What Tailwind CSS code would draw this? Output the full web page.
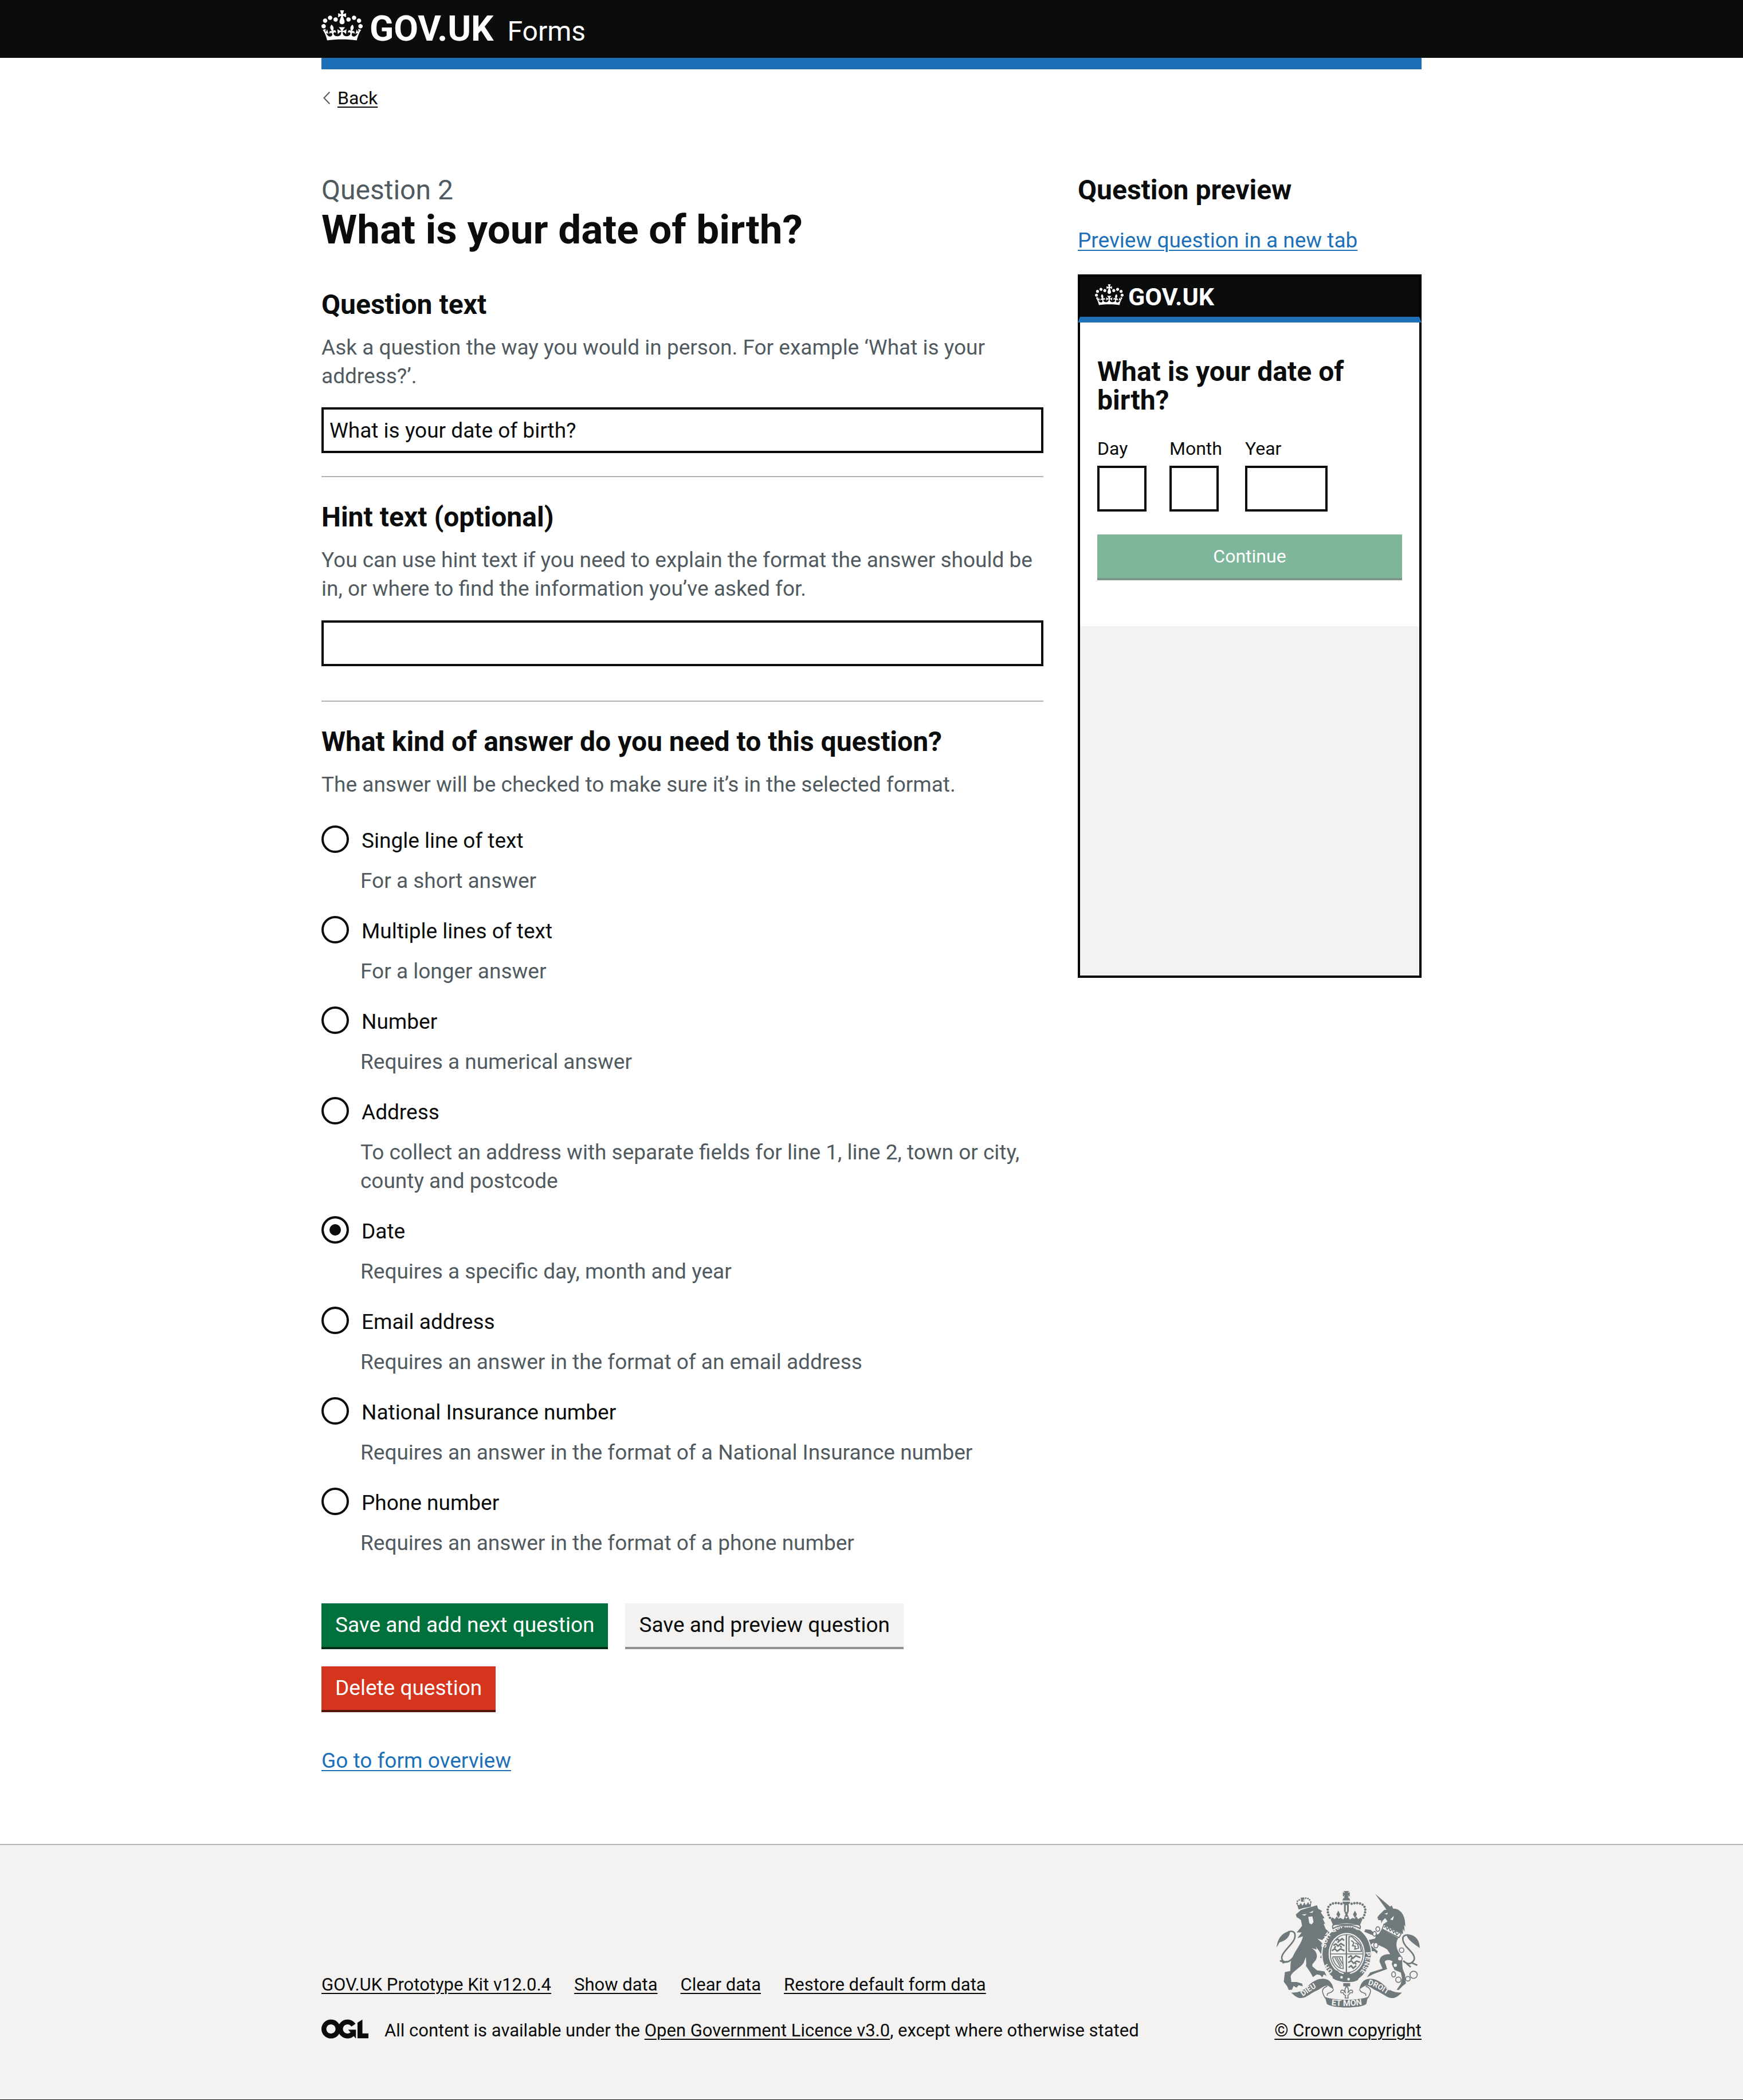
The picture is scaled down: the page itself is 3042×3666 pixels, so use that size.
<!DOCTYPE html>
<html lang="en">
<head>
<meta charset="utf-8">
<meta name="viewport" content="width=device-width, initial-scale=1">
<title>What is your date of birth? – GOV.UK Forms</title>
<script src="https://cdn.jsdelivr.net/npm/@tailwindcss/browser@4"></script>
</head>
<body class="bg-[#f3f2f1] font-['Roboto','Liberation_Sans',sans-serif] text-[37px] leading-[50px] text-[#0b0c0c]">

<svg class="hidden" aria-hidden="true">
  <symbol id="crown" viewBox="0 0 132 97">
    <path fill="currentColor" fill-rule="evenodd" d="M25 30.2c3.5 1.5 7.7-.2 9.1-3.7 1.5-3.6-.2-7.8-3.9-9.2-3.6-1.4-7.6.3-9.1 3.9-1.4 3.5.3 7.5 3.9 9zM9 39.5c3.6 1.5 7.8-.2 9.2-3.7 1.5-3.6-.2-7.8-3.9-9.1-3.6-1.5-7.6.2-9.1 3.8-1.4 3.5.3 7.5 3.8 9zM4.4 57.2c3.5 1.5 7.7-.2 9.1-3.8 1.5-3.6-.2-7.7-3.9-9.1-3.5-1.5-7.6.3-9.1 3.8-1.4 3.5.3 7.6 3.9 9.1zm38.3-21.4c3.5 1.5 7.7-.2 9.1-3.8 1.5-3.6-.2-7.7-3.9-9.1-3.6-1.5-7.6.3-9.1 3.8-1.3 3.6.4 7.7 3.9 9.1zm64.4-5.6c-3.6 1.5-7.8-.2-9.1-3.7-1.5-3.6.2-7.8 3.8-9.2 3.6-1.4 7.7.3 9.2 3.9 1.3 3.5-.4 7.5-3.9 9zm15.9 9.3c-3.6 1.5-7.7-.2-9.1-3.7-1.5-3.6.2-7.8 3.7-9.1 3.6-1.5 7.7.2 9.2 3.8 1.5 3.5-.3 7.5-3.8 9zm4.7 17.7c-3.6 1.5-7.8-.2-9.2-3.8-1.5-3.6.2-7.7 3.9-9.1 3.6-1.5 7.7.3 9.2 3.8 1.3 3.5-.4 7.6-3.9 9.1zM89.3 35.8c-3.6 1.5-7.8-.2-9.2-3.8-1.4-3.6.2-7.7 3.9-9.1 3.6-1.5 7.7.3 9.2 3.8 1.4 3.6-.3 7.7-3.9 9.1zM69.7 17.7l8.9 4.7V9.3l-8.9 2.8c-.2-.3-.5-.6-.9-.9L72.4 0H59.6l3.5 11.2c-.3.3-.6.5-.9.9l-8.8-2.8v13.1l8.8-4.7c.3.3.6.7.9.9l-5 15.4v.1c-.2.8-.4 1.6-.4 2.4 0 4.1 3.1 7.5 7 8.1h.2c.3 0 .7.1 1 .1.4 0 .7 0 1-.1h.2c4-.6 7.1-4.1 7.1-8.1 0-.8-.1-1.7-.4-2.4V34l-5.1-15.4c.4-.2.7-.6 1-.9zM66 92.8c16.9 0 32.8 1.1 47.1 3.2 4-16.9 8.9-26.7 14-33.5l-9.6-3.4c1 4.9 1.1 7.2 0 10.2-1.5-1.4-3-4.3-4.2-8.7L108.6 76c2.8-2 5-3.2 7.5-3.3-4.4 9.4-10 11.9-13.6 11.2-4.3-.8-6.3-4.6-5.6-7.9 1-4.7 5.7-5.9 8-.5 4.3-8.7-3-11.4-7.6-8.8 7.1-7.2 7.9-13.5 2.1-21.1-8 6.1-8.1 12.3-4.5 20.8-4.7-5.4-12.1-2.5-9.5 6.2 3.4-5.2 7.9-2 7.2 3.1-.6 4.3-6.4 7.8-13.5 7.2-10.3-.9-10.9-8-11.2-13.8 2.5-.5 7.1 1.8 11 7.3L80.2 60c-4.1 4.4-8 5.3-12.3 5.4 1.4-4.4 8-11.6 8-11.6H55.5s6.4 7.2 7.9 11.6c-4.2-.1-8-1-12.3-5.4l1.4 16.4c3.9-5.5 8.5-7.7 10.9-7.3-.3 5.8-.9 12.8-11.1 13.8-7.2.6-12.9-2.9-13.5-7.2-.7-5 3.8-8.3 7.1-3.1 2.7-8.7-4.6-11.6-9.4-6.2 3.7-8.5 3.6-14.7-4.6-20.8-5.8 7.6-5 13.9 2.2 21.1-4.7-2.6-11.9.1-7.7 8.8 2.3-5.5 7.1-4.2 8.1.5.7 3.3-1.3 7.1-5.7 7.9-3.5.7-9-1.8-13.5-11.2 2.5.1 4.7 1.3 7.5 3.3l-4.7-15.4c-1.2 4.4-2.7 7.2-4.3 8.7-1.1-3-.9-5.3 0-10.2l-9.5 3.4c5 6.9 9.9 16.7 14 33.5 14.8-2.1 30.8-3.2 47.7-3.2z"/>
  </symbol>
</svg>

<div class="bg-white">
  <header class="bg-[#0b0c0c]">
    <div class="mx-auto flex max-w-[1920px] items-baseline gap-6 pt-[15px] pb-4 text-white">
      <a href="#" class="flex items-baseline gap-3 text-[62px] leading-[70px] font-bold">
        <svg class="-mb-0.5 h-[53px] w-[72px]" aria-hidden="true"><use href="#crown"/></svg>
        <span>GOV.UK</span>
      </a>
      <a href="#" class="text-[48px]">Forms</a>
    </div>
  </header>

  <div class="mx-auto max-w-[1920px] border-t-20 border-[#1d70b8] pt-[30px] pb-[120px]">
    <a href="#" class="flex w-fit items-center text-[32px] leading-[40px]">
      <svg class="ml-[3px] mr-[13px] h-[22px] w-3" viewBox="0 0 12 22" fill="none" stroke="#505a5f" stroke-width="2" aria-hidden="true"><path d="M11.300 .7L1.500 11L11.300 21.300"/></svg>
      <span class="underline decoration-2 underline-offset-4">Back</span>
    </a>

    <div class="mt-[116px] grid grid-cols-[minmax(0,21fr)_minmax(0,10fr)] gap-[60px]">
      <main>
        <form>
          <p class="mb-1 text-[48px] text-[#505a5f]">Question 2</p>
          <h1 class="text-[71px] leading-[80px] font-bold">What is your date of birth?</h1>

          <div class="mt-[61px]">
            <label for="question-text" class="block text-[48px] leading-[60px] font-bold">Question text</label>
            <p class="mt-5 text-[#505a5f]">Ask a question the way you would in person. For example ‘What is your address?’.</p>
            <input id="question-text" type="text" value="What is your date of birth?" class="mt-[29px] block h-20 w-full border-4 border-[#0b0c0c] px-2.5">
          </div>

          <hr class="mt-10 mb-10 border-t-2 border-[#b1b4b6]">

          <div>
            <label for="hint-text" class="block text-[48px] leading-[60px] font-bold">Hint text (optional)</label>
            <p class="mt-5 text-[#505a5f]">You can use hint text if you need to explain the format the answer should be in, or where to find the information you’ve asked for.</p>
            <input id="hint-text" type="text" class="mt-[30px] block h-20 w-full border-4 border-[#0b0c0c] px-2.5">
          </div>

          <hr class="mt-[60px] mb-10 border-t-2 border-[#b1b4b6]">

          <fieldset>
            <legend class="text-[48px] leading-[60px] font-bold">What kind of answer do you need to this question?</legend>
            <p class="mt-5 text-[#505a5f]">The answer will be checked to make sure it’s in the selected format.</p>
            <div class="mt-[46px] flex flex-col gap-9">
              <div class="grid grid-cols-[48px_minmax(0,1fr)] gap-x-5">
                <input id="r1" name="kind" type="radio" class="size-12 appearance-none rounded-full border-4 border-[#0b0c0c] checked:bg-[#0b0c0c] checked:shadow-[inset_0_0_0_10px_#fff]">
                <label for="r1" class="w-fit pt-0.5 pl-0.5">Single line of text</label>
                <p class="col-start-2 mt-5 text-[#505a5f]">For a short answer</p>
              </div>
              <div class="grid grid-cols-[48px_minmax(0,1fr)] gap-x-5">
                <input id="r2" name="kind" type="radio" class="size-12 appearance-none rounded-full border-4 border-[#0b0c0c] checked:bg-[#0b0c0c] checked:shadow-[inset_0_0_0_10px_#fff]">
                <label for="r2" class="w-fit pt-0.5 pl-0.5">Multiple lines of text</label>
                <p class="col-start-2 mt-5 text-[#505a5f]">For a longer answer</p>
              </div>
              <div class="grid grid-cols-[48px_minmax(0,1fr)] gap-x-5">
                <input id="r3" name="kind" type="radio" class="size-12 appearance-none rounded-full border-4 border-[#0b0c0c] checked:bg-[#0b0c0c] checked:shadow-[inset_0_0_0_10px_#fff]">
                <label for="r3" class="w-fit pt-0.5 pl-0.5">Number</label>
                <p class="col-start-2 mt-5 text-[#505a5f]">Requires a numerical answer</p>
              </div>
              <div class="grid grid-cols-[48px_minmax(0,1fr)] gap-x-5">
                <input id="r4" name="kind" type="radio" class="size-12 appearance-none rounded-full border-4 border-[#0b0c0c] checked:bg-[#0b0c0c] checked:shadow-[inset_0_0_0_10px_#fff]">
                <label for="r4" class="w-fit pt-0.5 pl-0.5">Address</label>
                <p class="col-start-2 mt-5 text-[#505a5f]">To collect an address with separate fields for line 1, line 2, town or city, county and postcode</p>
              </div>
              <div class="grid grid-cols-[48px_minmax(0,1fr)] gap-x-5">
                <input id="r5" name="kind" type="radio" checked class="size-12 appearance-none rounded-full border-4 border-[#0b0c0c] checked:bg-[#0b0c0c] checked:shadow-[inset_0_0_0_10px_#fff]">
                <label for="r5" class="w-fit pt-0.5 pl-0.5">Date</label>
                <p class="col-start-2 mt-5 text-[#505a5f]">Requires a specific day, month and year</p>
              </div>
              <div class="grid grid-cols-[48px_minmax(0,1fr)] gap-x-5">
                <input id="r6" name="kind" type="radio" class="size-12 appearance-none rounded-full border-4 border-[#0b0c0c] checked:bg-[#0b0c0c] checked:shadow-[inset_0_0_0_10px_#fff]">
                <label for="r6" class="w-fit pt-0.5 pl-0.5">Email address</label>
                <p class="col-start-2 mt-5 text-[#505a5f]">Requires an answer in the format of an email address</p>
              </div>
              <div class="grid grid-cols-[48px_minmax(0,1fr)] gap-x-5">
                <input id="r7" name="kind" type="radio" class="size-12 appearance-none rounded-full border-4 border-[#0b0c0c] checked:bg-[#0b0c0c] checked:shadow-[inset_0_0_0_10px_#fff]">
                <label for="r7" class="w-fit pt-0.5 pl-0.5">National Insurance number</label>
                <p class="col-start-2 mt-5 text-[#505a5f]">Requires an answer in the format of a National Insurance number</p>
              </div>
              <div class="grid grid-cols-[48px_minmax(0,1fr)] gap-x-5">
                <input id="r8" name="kind" type="radio" class="size-12 appearance-none rounded-full border-4 border-[#0b0c0c] checked:bg-[#0b0c0c] checked:shadow-[inset_0_0_0_10px_#fff]">
                <label for="r8" class="w-fit pt-0.5 pl-0.5">Phone number</label>
                <p class="col-start-2 mt-5 text-[#505a5f]">Requires an answer in the format of a phone number</p>
              </div>
            </div>
          </fieldset>

          <div class="mt-20 flex flex-wrap gap-[30px]">
            <button type="submit" class="h-[76px] bg-[#00703c] px-6 text-white shadow-[0_4px_0_#002d18]">Save and add next question</button>
            <button type="submit" class="h-[76px] bg-[#f3f2f1] px-6 shadow-[0_4px_0_#929191]">Save and preview question</button>
          </div>
          <button type="button" class="mt-[34px] block h-[76px] bg-[#d4351c] px-6 text-white shadow-[0_4px_0_#55150b]">Delete question</button>
          <p class="mt-16"><a href="#" class="text-[#1d70b8] underline decoration-2 underline-offset-4">Go to form overview</a></p>
        </form>
      </main>

      <aside>
        <h2 class="text-[48px] font-bold">Question preview</h2>
        <p class="mt-[38px]"><a href="#" class="text-[#1d70b8] underline decoration-2 underline-offset-4">Preview question in a new tab</a></p>
        <div class="mt-[34px] flex min-h-[1228px] flex-col">
          <div class="flex items-baseline gap-2 border-4 border-b-10 border-black border-b-[#1d70b8] bg-[#0b0c0c] px-[26px] py-[10px] text-[43px] font-bold text-white">
            <svg class="-mb-0.5 h-[37px] w-[50px]" aria-hidden="true"><use href="#crown"/></svg>
            <span>GOV.UK</span>
          </div>
          <div class="grow border-4 border-t-0 border-black bg-[#f3f2f1]">
            <div class="bg-white px-[30px] pt-[61px] pb-[84px]">
              <h3 class="text-[48px] font-bold">What is your date of birth?</h3>
              <div class="mt-[39px] flex gap-10 text-[32px] leading-[40px]">
                <div><label for="day" class="block">Day</label><input id="day" type="text" class="mt-[10px] block h-20 w-[86px] border-4 border-[#0b0c0c]"></div>
                <div><label for="month" class="block">Month</label><input id="month" type="text" class="mt-[10px] block h-20 w-[86px] border-4 border-[#0b0c0c]"></div>
                <div><label for="year" class="block">Year</label><input id="year" type="text" class="mt-[10px] block h-20 w-[144px] border-4 border-[#0b0c0c]"></div>
              </div>
              <button type="button" disabled class="mt-10 block h-[76px] w-full bg-[#00703c] text-[32px] text-white opacity-50 shadow-[0_4px_0_#002d18]">Continue</button>
            </div>
          </div>
        </div>
      </aside>
    </div>
  </div>
</div>

<footer class="border-t-2 border-b border-t-[#b1b4b6] border-b-[#0b0c0c] pt-20 pb-[100px] text-[31px] leading-[40px]">
  <div class="mx-auto flex max-w-[1920px] items-end justify-between">
    <div>
      <nav class="flex flex-wrap gap-10">
        <a href="#" class="underline decoration-2 underline-offset-4">GOV.UK Prototype Kit v12.0.4</a>
        <a href="#" class="underline decoration-2 underline-offset-4">Show data</a>
        <a href="#" class="underline decoration-2 underline-offset-4">Clear data</a>
        <a href="#" class="underline decoration-2 underline-offset-4">Restore default form data</a>
      </nav>
      <div class="mt-10 flex gap-7">
        <svg class="h-[34px] w-[82px]" viewBox="0 0 483.2 195.7" fill="currentColor" role="img" aria-label="OGL"><path d="M421.5 142.8V.1l-50.7 32.3v161.1h112.4v-50.7zm-122.300-9.6A47.120 47.120 0 0 1 221 97.8c0-26 21.100-47.100 47.100-47.100 16.700 0 31.400 8.700 39.700 21.800l42.700-27.200A97.630 97.630 0 0 0 268.100 0c-36.500 0-68.300 20.100-85.100 49.700A98 98 0 0 0 97.800 0C43.900 0 0 43.900 0 97.800s43.900 97.800 97.800 97.800c36.500 0 68.300-20.100 85.100-49.700a97.760 97.760 0 0 0 149.600 25.400l19.400 22.200h3v-87.800h-80l24.300 27.500zM97.800 145c-26 0-47.100-21.100-47.100-47.100s21.100-47.100 47.100-47.100 47.100 21.100 47.100 47.100S123.800 145 97.800 145"/></svg>
        <span>All content is available under the <a href="#" class="underline decoration-2 underline-offset-4">Open Government Licence v3.0</a>, except where otherwise stated</span>
      </div>
    </div>

    <a href="#" class="flex flex-col items-center gap-5">
      <svg class="h-[204px] w-[250px]" viewBox="135 62 750 613" fill="#6f787b" stroke="none" aria-hidden="true">
        <!-- lion -->
        <path d="M235 186L262 162L346 137L352 155L374 168L366 175L386 205L376 207L389 235L381 235L392 262L412 280L374 320L348 312L372 335L392 355L412 392L411 410L402 422L395 408L388 420L380 402L372 416L362 412L370 396L352 370L340 355L345 370L318 362C345 378 352 402 340 425L322 447L322 458L346 478L385 484L397 508L382 500L374 516L362 503L345 500L325 514L312 490L288 455L290 445L288 408L276 440C260 465 215 485 208 510L212 540L240 540L268 548L272 562L250 557L238 570L224 560L215 580L198 582L190 562L172 538L178 488L206 482L208 440C222 380 265 345 272 300L243 310L266 280L240 280L268 245L262 215L252 207L240 200Z"/>
        <path fill="#f3f2f1" d="M266 186L292 184L282 192ZM305 176L328 166L322 177ZM300 198L322 196L328 225L318 238L306 232Z"/>
        <path d="M250 160L240 128L252 138L262 125L270 140L280 122L288 138L300 120L306 134L316 122L314 145Q280 150 250 160ZM258 98L280 96L272 110L284 116L262 120L266 106Z"/>
        <path fill="none" stroke="#6f787b" stroke-width="9" stroke-linecap="round" stroke-dasharray="0 12" d="M242 128Q240 105 268 110Q300 85 314 122"/>
        <path d="M135 358C138 320 158 280 205 273C205 305 178 325 150 332Z"/>
        <path fill="none" stroke="#6f787b" stroke-width="8" d="M195 277C238 262 240 305 215 335C185 372 145 405 168 430C190 445 212 425 228 405M152 428L172 436M165 440L190 432"/>
        <!-- unicorn -->
        <path d="M651 77L736 150L712 162Z"/>
        <path d="M712 160L738 138L746 155C775 152 812 180 809 250L803 240L806 275L797 262L797 288L695 236L716 222L704 205L690 218L684 232L682 216L668 215L663 200L672 188L698 163Z"/>
        <path fill="#f3f2f1" d="M700 182L718 176L714 186ZM730 212L750 192L744 215Z"/>
        <path fill="none" stroke="#6f787b" stroke-width="5" d="M697 238L788 287L776 307L688 262ZM698 254L706 245L714 264L722 253L730 272L740 262L748 282L756 272L764 292L774 284"/>
        <path d="M686 262L772 310C752 345 768 375 785 400C800 428 788 455 800 482L808 500L812 548L796 560L775 582L764 580L785 550L792 520L786 490L752 476L738 445L742 430C720 420 692 425 706 445L714 472L650 495L608 515L625 490L690 470L674 432C674 402 700 393 730 393L715 370C690 352 660 345 640 335L628 345L640 358L665 378L660 392L648 378L630 378L610 348L606 322L650 312L655 302L620 287L594 276L600 263L628 266L655 292L670 288Z"/>
        <path d="M885 362C886 315 855 288 815 290C822 320 850 335 885 362Z"/>
        <path fill="none" stroke="#6f787b" stroke-width="8" d="M822 293C790 292 788 322 815 355C845 385 870 410 850 432C835 450 815 445 798 428M815 442L838 462M845 440L872 452"/>
        <g fill="none" stroke="#6f787b" stroke-width="5"><ellipse cx="665" cy="262" rx="10" ry="12"/><ellipse cx="748" cy="500" rx="10" ry="14"/><circle cx="773" cy="528" r="14"/><circle cx="823" cy="523" r="12"/><circle cx="853" cy="502" r="19"/></g>
        <g fill="#f3f2f1" stroke="#6f787b" stroke-width="5"><ellipse cx="648" cy="287" rx="9" ry="12"/><ellipse cx="655" cy="347" rx="11" ry="14"/><circle cx="790" cy="373" r="12"/><circle cx="781" cy="417" r="12"/><circle cx="757" cy="452" r="11"/></g>
        <!-- garter and quartered shield -->
        <ellipse cx="502" cy="393" rx="133" ry="152" fill="#f3f2f1"/>
        <ellipse cx="502" cy="393" rx="127" ry="147"/>
        <ellipse cx="502" cy="391" rx="95" ry="109" fill="#f3f2f1"/>
        <ellipse cx="502" cy="391" rx="86" ry="100" fill="none" stroke="#6f787b" stroke-width="5"/>
        <path d="M497 290H504V390H588V395H504V490H497V395H415V390H497ZM486 490H520V502H486Z"/>
        <g fill="none" stroke="#6f787b" stroke-width="8" stroke-linejoin="round">
          <path d="M445 322L455 314L464 324L478 312L488 322M432 348L446 340L456 352L472 338L490 350M424 376L440 366L452 378L470 366L490 376M462 324L454 334M468 350L476 360M444 352L438 362"/>
          <path d="M510 412L524 402L534 416L550 402L574 412M510 438L526 428L538 442L554 430L572 436M512 464L526 454L536 468L552 454M530 414L524 424M546 438L552 448"/>
          <path stroke-width="6" d="M514 302H530L572 345L580 380H514ZM526 322L540 334L532 350L548 352L544 368L564 362L560 342L546 336"/>
          <path stroke-width="5" d="M428 408H480L484 470C455 468 432 440 428 408M440 412L470 462M450 412L476 456M462 412L480 444"/>
        </g>
        <path fill="none" id="garter-top" d="M393 362C405 225 595 215 610 350"/>
        <path fill="none" id="garter-right" d="M600 383C606 420 595 460 566 492"/>
        <path fill="none" id="garter-left" d="M432 480C410 465 398 445 393 418"/>
        <g fill="#f3f2f1" font-family="Roboto" font-weight="700" font-size="36">
          <text><textPath href="#garter-top">SOIT QUI MAL</textPath></text>
          <text><textPath href="#garter-right">PENSE</textPath></text>
          <text><textPath href="#garter-left">OH</textPath></text>
        </g>
        <path d="M430 488C455 512 545 520 575 505L560 530C530 548 460 542 428 520Z"/>
        <circle cx="475" cy="515" r="7" fill="#f3f2f1"/><circle cx="512" cy="525" r="7" fill="#f3f2f1"/>
        <circle cx="444" cy="498" r="17" fill="none" stroke="#6f787b" stroke-width="6"/>
        <!-- imperial crown -->
        <path fill="#f3f2f1" stroke="#6f787b" stroke-width="6" d="M430 260C418 230 450 238 500 238S582 230 572 260C540 236 462 236 430 260Z"/>
        <path d="M425 200L440 210L450 195L458 208L470 204L485 212L492 196L500 208L510 196L518 212L532 204L545 208L552 195L562 210L578 200L584 212L572 240Q500 224 430 240L418 212ZM458 165L468 185L460 205L448 185ZM545 165L556 185L545 205L535 185ZM490 172H512L506 185L512 198H490L496 185Z"/>
        <path d="M488 135H497V172H488ZM504 135H513V172H504ZM480 118H520Q520 135 500 136Q480 135 480 118ZM480 112Q482 96 500 95Q518 96 520 112ZM485 63H515L506 75L518 68V92L506 84L514 96H486L494 84L482 92V68L494 75Z"/>
        <path fill="none" stroke="#6f787b" stroke-width="13" stroke-linecap="round" stroke-dasharray="0 15" d="M414 203C380 140 425 110 488 134M588 203C622 140 577 110 514 134"/>
        <!-- motto ribbon -->
        <path d="M211 595C250 597 275 585 300 560C330 530 360 520 385 523C415 525 430 555 433 578L405 560C380 555 370 575 345 585C310 600 290 624 262 624C240 624 225 608 211 595ZM792 595C752 597 727 585 702 560C672 530 642 520 617 523C587 525 572 555 569 578L597 560C622 555 632 575 657 585C692 600 712 624 740 624C762 624 777 608 792 595ZM388 618C440 638 560 638 613 618L605 655C580 680 425 680 398 655Z"/>
        <path fill="none" stroke="#6f787b" stroke-width="5" d="M400 562C365 575 372 595 390 625M433 578C425 605 395 590 400 612M602 562C637 575 630 595 612 625M569 578C577 605 607 590 602 612"/>
        <path fill="none" id="ribbon-left" d="M272 616C310 590 340 565 384 550"/>
        <path fill="none" id="ribbon-mid" d="M412 660Q502 672 592 658"/>
        <path fill="none" id="ribbon-right" d="M612 553C660 566 690 590 735 618"/>
        <g fill="#f3f2f1" font-family="Roboto" font-weight="700" font-size="40">
          <text><textPath href="#ribbon-left">DIEU</textPath></text>
          <text font-size="44"><textPath href="#ribbon-mid" startOffset="50%" text-anchor="middle">ET MON</textPath></text>
          <text><textPath href="#ribbon-right">DROIT</textPath></text>
        </g>
        <path d="M484 546H520V562H508V572H496V562H484Z"/>
        <path fill="#f3f2f1" stroke="#6f787b" stroke-width="5" d="M502 562C515 575 512 588 508 598C520 575 538 580 532 596L520 596C518 606 510 608 508 610L510 624H494L496 610C490 608 484 604 484 596L472 596C466 580 484 575 496 598C490 585 490 575 502 562Z"/>
      </svg>
      <span class="underline decoration-2 underline-offset-4">© Crown copyright</span>
    </a>
  </div>
</footer>
</body>
</html>
